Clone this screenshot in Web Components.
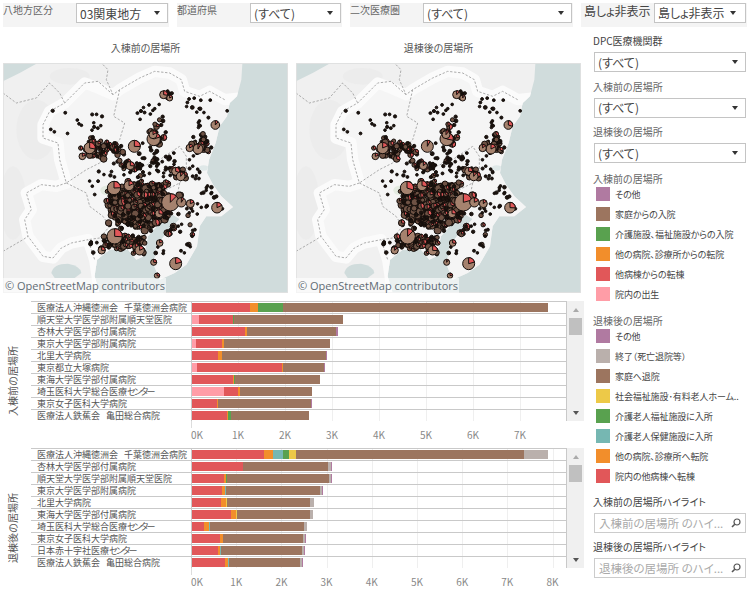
<!DOCTYPE html>
<html lang="ja">
<head>
<meta charset="utf-8">
<title>居場所ダッシュボード</title>
<style>
    html, body {
        margin: 0;
        padding: 0;
        background: #fff;
        overflow: hidden;
    }
    body {
        width: 750px;
        height: 590px;
        font-family: "Noto Sans CJK JP", "Noto Sans", sans-serif;
        font-feature-settings: "palt";
        color: #555;
    }
    .kana { letter-spacing: -1.6px; }
</style>
</head>
<body>
<tb-dashboard>
    <tb-filter slot="top" label="八地方区分"><tb-select value="03関東地方"></tb-select></tb-filter>
    <tb-filter slot="top" label="都道府県"><tb-select value="(すべて)"></tb-select></tb-filter>
    <tb-filter slot="top" label="二次医療圏"><tb-select value="(すべて)"></tb-select></tb-filter>
    <tb-filter slot="top" label="島しょ非表示" big><tb-select value="島しょ非表示" style="--arrow-right: 13px"></tb-select></tb-filter>

    <tb-map slot="maps" heading="入棟前の居場所"></tb-map>
    <tb-map slot="maps" heading="退棟後の居場所" seed="7"></tb-map>

    <tb-chart slot="charts" heading="入棟前の居場所" tick="47" count="8" shift="16">
        <tb-row segs="r58 o8 g25.3 b264.7">医療法人沖縄徳洲会 千葉徳洲会病院</tb-row>
        <tb-row segs="k7 r34 g.7 b109.3">順天堂大学医学部附属順天堂医院</tb-row>
        <tb-row segs="r53 o2 b89 p2">杏林大学医学部付属病院</tb-row>
        <tb-row segs="k4 r26 o2 b106">東京大学医学部附属病院</tb-row>
        <tb-row segs="r26 o4 b104 p1">北里大学病院</tb-row>
        <tb-row segs="k5 r85 o1 b41 p1">東京都立大塚病院</tb-row>
        <tb-row segs="r41 o1 g1 b85">東海大学医学部付属病院</tb-row>
        <tb-row segs="k32 r14 o2 b72">埼玉医科大学総合医療<span class="kana">センター</span></tb-row>
        <tb-row segs="r25 o1 b93 p1">東京女子医科大学病院</tb-row>
        <tb-row segs="r35 o1 g3 b78">医療法人鉄蕉会 亀田総合病院</tb-row>
    </tb-chart>
    <tb-chart slot="charts" heading="退棟後の居場所" tick="45.2" count="9" shift="15">
        <tb-row segs="r72 o9.3 t9.7 g6 y7 b228 a24">医療法人沖縄徳洲会 千葉徳洲会病院</tb-row>
        <tb-row segs="r51.3 b84.7 a3.3 p.7">杏林大学医学部付属病院</tb-row>
        <tb-row segs="r32 o2 g1 b102 a2 p1">順天堂大学医学部附属順天堂医院</tb-row>
        <tb-row segs="r30 o3 t1 b94 a1.5 p.5">東京大学医学部附属病院</tb-row>
        <tb-row segs="r29 o5 y1 b83 a4">北里大学病院</tb-row>
        <tb-row segs="r39 o5 y1 b73 a3">東海大学医学部付属病院</tb-row>
        <tb-row segs="r12 o5 t.7 b94.3 a3">埼玉医科大学総合医療<span class="kana">センター</span></tb-row>
        <tb-row segs="r28 o3 b80 a2 p1">東京女子医科大学病院</tb-row>
        <tb-row segs="r26 o2 t1 b81 a1.5 p.5">日本赤十字社医療<span class="kana">センター</span></tb-row>
        <tb-row segs="r33 o3 t1 b71 a2 p1">医療法人鉄蕉会 亀田総合病院</tb-row>
    </tb-chart>

    <tb-field slot="side" label="DPC医療機関群" dark><tb-select value="(すべて)"></tb-select></tb-field>
    <tb-field slot="side" label="入棟前の居場所"><tb-select value="(すべて)"></tb-select></tb-field>
    <tb-field slot="side" label="退棟後の居場所"><tb-select value="(すべて)"></tb-select></tb-field>
    <tb-legend slot="side" heading="入棟前の居場所">
        <tb-key color="#B07AA1">その他</tb-key>
        <tb-key color="#9C755F">家庭からの入院</tb-key>
        <tb-key color="#59A14F">介護施設、福祉施設からの入院</tb-key>
        <tb-key color="#F28E2B">他の病院、診療所からの転院</tb-key>
        <tb-key color="#E15759">他病棟からの転棟</tb-key>
        <tb-key color="#FF9DA7">院内の出生</tb-key>
    </tb-legend>
    <tb-legend slot="side" heading="退棟後の居場所">
        <tb-key color="#B07AA1">その他</tb-key>
        <tb-key color="#BAB0AC">終了（死亡退院等）</tb-key>
        <tb-key color="#9C755F">家庭へ退院</tb-key>
        <tb-key color="#EDC948">社会福祉施設･有料老人ホーム..</tb-key>
        <tb-key color="#59A14F">介護老人福祉施設に入所</tb-key>
        <tb-key color="#76B7B2">介護老人保健施設に入所</tb-key>
        <tb-key color="#F28E2B">他の病院、診療所へ転院</tb-key>
        <tb-key color="#E15759">院内の他病棟へ転棟</tb-key>
    </tb-legend>
    <tb-field slot="side" label="入棟前の居場所ハイライト" dark><tb-search text="入棟前の居場所 のハイ..."></tb-search></tb-field>
    <tb-field slot="side" label="退棟後の居場所ハイライト" dark><tb-search text="退棟後の居場所 のハイ..."></tb-search></tb-field>
</tb-dashboard>

<script>
const colours = {
    r: '#E15759', o: '#F28E2B', g: '#59A14F', b: '#9C755F', p: '#B07AA1',
    k: '#FF9DA7', t: '#76B7B2', y: '#EDC948', a: '#BAB0AC'
};

class TbElement extends HTMLElement {
    render(html) {
        if (!this.shadowRoot) this.attachShadow({ mode: 'open' });
        this.shadowRoot.innerHTML = html;
    }
}

class TbDashboard extends TbElement {
    connectedCallback() {
        this.render(`
            <style>
                :host { display: block; width: 750px; height: 590px; overflow: hidden; }
                .top {
                    display: grid;
                    grid-template-columns: 166px 165px 223px 166px;
                    column-gap: 8px;
                    padding: 3px 0 0 3px;
                }
                .main { display: flex; }
                .left { width: 590px; flex: none; }
                .maps { display: flex; gap: 8px; padding-left: 3px; }
                .charts { display: flex; flex-direction: column; gap: 3px; margin-top: 8px; }
                .side { flex: 1; min-width: 0; padding-top: 8px; }
            </style>
            <div class="top"><slot name="top"></slot></div>
            <div class="main">
                <div class="left">
                    <div class="maps"><slot name="maps"></slot></div>
                    <div class="charts"><slot name="charts"></slot></div>
                </div>
                <div class="side"><slot name="side"></slot></div>
            </div>`);
    }
}

class TbSelect extends TbElement {
    connectedCallback() {
        this.render(`
            <style>
                :host {
                    display: flex;
                    align-items: center;
                    box-sizing: border-box;
                    height: 20px;
                    padding: 0 0 0 3px;
                    background: #fff;
                    border: 1px solid #c4c4c4;
                    font-size: 12px;
                    color: #444;
                    white-space: nowrap;
                }
                span { flex: 1; min-width: 0; }
                i {
                    width: 0;
                    height: 0;
                    margin-right: calc(var(--arrow-right, 11px) - 4px);
                    border-left: 3px solid transparent;
                    border-right: 3px solid transparent;
                    border-top: 4px solid #333;
                }
            </style>
            <span>${this.getAttribute('value')}</span><i></i>`);
    }
}

class TbFilter extends TbElement {
    connectedCallback() {
        const big = this.hasAttribute('big');
        this.render(`
            <style>
                :host {
                    display: grid;
                    grid-template-columns: 73px 1fr;
                    box-sizing: border-box;
                    height: 24px;
                    padding-right: 1px;
                    background: #f4f4f4;
                    color: #666;
                    font-size: ${big ? 12 : 10}px;
                    line-height: ${big ? 16 : 13}px;
                    white-space: nowrap;
                }
                span { ${big ? 'padding-left: 3px; color: #444;' : ''} }
            </style>
            <span>${this.getAttribute('label')}</span>
            <div><slot></slot></div>`);
    }
}

class TbField extends TbElement {
    connectedCallback() {
        this.render(`
            <style>
                :host { display: block; padding: 0 4px 0 3px; margin-bottom: 8.5px; }
                div {
                    height: 17px;
                    line-height: 12px;
                    font-size: 10px;
                    color: ${this.hasAttribute('dark') ? '#444' : '#666'};
                    white-space: nowrap;
                }
                ::slotted(*) { margin-left: 1px; }
            </style>
            <div>${this.getAttribute('label')}</div>
            <slot></slot>`);
    }
}

class TbSearch extends TbElement {
    connectedCallback() {
        this.render(`
            <style>
                :host {
                    display: flex;
                    align-items: center;
                    box-sizing: border-box;
                    height: 20px;
                    padding: 0 4px 0 4px;
                    border: 1px solid #ccc;
                    font-size: 11.5px;
                    color: #aaa;
                    white-space: nowrap;
                }
                span { flex: 1; min-width: 0; overflow: hidden; }
                svg { flex: none; display: block; }
            </style>
            <span>${this.getAttribute('text')}</span>
            <svg width="10" height="10" viewBox="0 0 10 10" fill="none" stroke="#555">
                <circle cx="6" cy="4" r="3" stroke-width="1.2"/>
                <path d="M3.8 6.2 L1 9" stroke-width="1.6"/>
            </svg>`);
    }
}

class TbLegend extends TbElement {
    connectedCallback() {
        this.render(`
            <style>
                :host { display: block; padding: 1.5px 0 0 3px; margin-bottom: 9.5px; }
                div { height: 11px; line-height: 11px; font-size: 10px; color: #666; white-space: nowrap; }
            </style>
            <div>${this.getAttribute('heading')}</div>
            <slot></slot>`);
    }
}

class TbKey extends TbElement {
    connectedCallback() {
        this.render(`
            <style>
                :host {
                    display: flex;
                    align-items: center;
                    gap: 5px;
                    height: 20px;
                    padding-left: 3px;
                    font-size: 9px;
                    letter-spacing: -0.1px;
                    color: #444;
                    white-space: nowrap;
                }
                i { width: 14px; height: 14px; flex: none; background: ${this.getAttribute('color')}; }
            </style>
            <i></i><slot></slot>`);
    }
}

class TbRow extends TbElement {
    connectedCallback() {
        const bars = this.getAttribute('segs').trim().split(/\s+/).map(seg =>
            `<i style="width:${parseFloat(seg.slice(1))}px;background:${colours[seg[0]]}"></i>`).join('');
        this.render(`
            <style>
                :host {
                    display: flex;
                    box-sizing: border-box;
                    height: 12px;
                    border-top: 1px solid #c9c9c9;
                    border-right: 1px solid #c9c9c9;
                }
                .name {
                    flex: none;
                    box-sizing: border-box;
                    width: 160px;
                    padding-left: 6px;
                    font-size: 9px;
                    line-height: 11px;
                    word-spacing: 4px;
                    color: #555;
                    white-space: nowrap;
                    overflow: hidden;
                }
                .plot {
                    flex: 1;
                    display: flex;
                    align-items: flex-start;
                    padding-top: 1px;
                    border-left: 1px solid #c9c9c9;
                    background: repeating-linear-gradient(90deg,
                        transparent 0, transparent calc(var(--tick) - 1px),
                        #efefef calc(var(--tick) - 1px), #efefef var(--tick));
                }
                i { display: block; height: 9px; flex: none; }
            </style>
            <div class="name"><slot></slot></div>
            <div class="plot">${bars}</div>`);
    }
}

class TbChart extends TbElement {
    connectedCallback() {
        const tick = parseFloat(this.getAttribute('tick'));
        const count = +this.getAttribute('count');
        let labels = '';
        for (let i = 0; i < count; i++) labels += `<span>${i}K</span>`;
        this.render(`
            <style>
                :host {
                    display: grid;
                    grid-template-columns: 31px 536px 17px;
                    grid-template-rows: 120px 24px;
                    --tick: ${tick}px;
                }
                .title {
                    grid-row: 1 / 3;
                    justify-self: start;
                    align-self: center;
                    margin: ${this.getAttribute('shift')}px 0 0 7px;
                    writing-mode: vertical-rl;
                    text-orientation: sideways;
                    transform: rotate(180deg);
                    font-feature-settings: normal;
                    font-size: 10px;
                    line-height: 12px;
                    color: #555;
                    white-space: nowrap;
                }
                .rows { display: block; }
                .bar {
                    display: flex;
                    flex-direction: column;
                    align-items: center;
                    background: #f0f0f0;
                }
                .btn { height: 17px; flex: none; display: flex; align-items: center; justify-content: center; }
                .btn i { width: 0; height: 0; margin-top: 1px; border-left: 3.5px solid transparent; border-right: 3.5px solid transparent; }
                .up i { border-bottom: 4px solid #aaa; }
                .down i { border-top: 4px solid #555; }
                .thumb { width: 13px; height: 17px; flex: none; background: #c0c0c0; }
                .gap { flex: 1; }
                .axis {
                    grid-column: 2;
                    position: relative;
                    display: flex;
                    margin-left: 154px;
                    font-size: 10px;
                    line-height: 14px;
                    padding-top: 7px;
                    color: #888;
                }
                .axis::before {
                    content: "";
                    position: absolute;
                    left: 6px;
                    top: 0;
                    width: 1px;
                    height: 7px;
                    background: #ddd;
                }
                .axis span { flex: none; box-sizing: border-box; width: var(--tick); }
                .axis span:first-child { padding-left: 6px; }
            </style>
            <div class="title">${this.getAttribute('heading')}</div>
            <div class="rows"><slot></slot></div>
            <div class="bar">
                <div class="btn up"><i></i></div>
                <div class="thumb"></div>
                <div class="gap"></div>
                <div class="btn down"><i></i></div>
            </div>
            <div class="axis">${labels}</div>`);
    }
}

// map geometry is in 3x px, the view box scales it back
const LAND = [[10,65],[60,40],[110,12],[728,12],[725,60],[712,110],[690,130],[682,170],[660,200],[648,250],[628,300],[622,340],[640,375],[665,410],[700,442],[665,470],[620,470],[600,500],[592,560],[560,615],[525,640],[480,660],[462,615],[470,560],[500,520],[540,478],[520,465],[480,490],[445,530],[432,590],[410,600],[385,570],[330,570],[292,600],[285,650],[300,700],[10,700]];
const REGION = 'M675 120 L630 95 L600 110 L555 95 L545 60 L510 40 L465 35 L420 55 L360 90 L340 105 L295 85 L255 70 L195 130 L150 155 L130 195 L130 235 L175 250 L180 300 L200 370 L170 380 L125 375 L80 400 L95 450 L75 480 L85 530 L130 590 L160 595 L185 565 L215 550 L265 540 L285 600 L300 700 L860 700 L860 100 Z';
const BORDERS = [
    'M675 120 L630 95 L600 110 L555 95 L545 60 L510 40 L465 35 L420 55 L360 90 L340 105 L320 60 L325 30 L310 15',
    'M340 105 L295 65 L255 70 L195 130 L150 155 L130 195 L130 235 L175 250 L180 300 L200 370 L170 380 L125 375 L80 400 L95 450 L75 480 L85 530 L130 590 L160 595 L185 565 L215 550 L265 540 L285 600',
    'M10 100 L50 130 L110 115 L150 70 L180 100 L195 130',
    'M10 575 L70 540 L85 530',
    'M360 90 L342 170 L375 190 L360 240 L330 270 L300 310 L260 330 L200 370',
    'M200 370 L260 400 L270 440 L310 470 L330 500 L300 535 L265 540',
    'M430 320 L480 300 L540 260 L560 290 L560 340 L540 370 L500 390',
    'M540 370 L530 420 L505 440 L490 470'
];
const CLUSTERS = [
    [300,360,20,20,7,4,5], [250,190,50,25,16,4,5], [440,150,30,15,10,4,5], [600,160,30,40,20,4,6],
    [290,560,15,15,8,4,6], [490,310,25,25,26,4,6], [460,600,8,10,3,4,6], [580,350,20,30,12,4,5],
    [570,530,20,40,22,4,7], [640,400,25,25,12,4,6], [610,450,25,15,10,4,5], [500,590,40,30,6,3,5],
    [285,265,20,14,60,5,11], [345,265,14,10,26,5,9], [470,215,12,20,24,5,10], [505,105,8,7,8,4,8],
    [605,255,16,12,38,5,9], [535,345,10,10,20,5,10], [390,320,26,16,36,4,8], [440,300,26,26,22,4,6],
    [420,385,38,9,90,5,11], [355,440,13,28,90,5,11], [430,445,42,30,420,5,11], [505,485,9,18,34,5,10],
    [370,545,28,11,140,5,11], [420,572,9,7,16,5,9]
];
const BIG = [
    [404,260,18], [343,385,20], [512,428,26], [652,444,16], [528,612,18], [345,530,23],
    [462,238,20], [492,105,12], [647,196,13], [595,268,15], [528,335,12], [543,350,13],
    [392,318,12], [420,572,14], [270,265,17], [248,290,10], [572,432,12], [545,428,14],
    [388,378,15], [478,462,12], [510,115,9], [460,225,12], [306,572,11], [462,608,9],
    [472,648,8], [570,265,11], [480,550,10]
];

function inLand(x, y) {
    let inside = false;
    for (let i = 0, j = LAND.length - 1; i < LAND.length; j = i++) {
        const [xi, yi] = LAND[i], [xj, yj] = LAND[j];
        if ((yi > y) !== (yj > y) && x < (xj - xi) * (y - yi) / (yj - yi) + xi) inside = !inside;
    }
    return inside;
}

function pie(x, y, r, share, fill) {
    const end = share * Math.PI * 2;
    const ex = x + r * Math.sin(end), ey = y - r * Math.cos(end);
    const large = share > 0.5 ? 1 : 0;
    return `<circle cx="${x}" cy="${y}" r="${r}" fill="${fill}"/>` +
        `<path d="M${x} ${y} L${x} ${y - r} A${r} ${r} 0 ${large} 1 ${ex.toFixed(1)} ${ey.toFixed(1)} Z" fill="#E15759"/>`;
}

function buildBubbles(seed) {
    // same hospitals on both maps, only the slices move
    let s = 1234;
    const rnd = () => {
        s = (s * 16807) % 2147483647;
        return s / 2147483647;
    };
    let slice = 99 + seed;
    const share = () => {
        slice = (slice * 48271) % 2147483647;
        return slice / 2147483647;
    };
    const gauss = () => (rnd() + rnd() + rnd() - 1.5) / 0.5;
    let out = '';
    for (const [cx, cy, sx, sy, n, rmin, rmax] of CLUSTERS) {
        for (let i = 0; i < n; i++) {
            const x = +(cx + gauss() * sx).toFixed(1);
            const y = +(cy + gauss() * sy).toFixed(1);
            if (!inLand(x, y)) continue;
            const r = +(rmin + Math.pow(rnd(), 2.2) * (rmax - rmin)).toFixed(1);
            if (r < 6) {
                out += `<circle cx="${x}" cy="${y}" r="${r}" fill="#1d140f"/>`;
            } else if (share() < 0.5) {
                out += pie(x, y, r, 0.2 + share() * 0.3, '#6e5244');
            } else {
                out += `<circle cx="${x}" cy="${y}" r="${r}" fill="#6e5244"/>`;
            }
        }
    }
    for (const [x, y, r] of BIG) out += pie(x, y, r, 0.08 + share() * 0.22, '#a5826e');
    return out;
}

class TbMap extends TbElement {
    connectedCallback() {
        const seed = +(this.getAttribute('seed') || 0);
        const land = 'M' + LAND.map(p => p.join(' ')).join(' L') + ' Z';
        const id = 'land' + seed;
        this.render(`
            <style>
                :host { display: block; width: 285px; flex: none; }
                h2 {
                    margin: 0;
                    height: 36px;
                    box-sizing: border-box;
                    padding-top: 14px;
                    font-size: 10px;
                    line-height: 14px;
                    font-weight: 400;
                    text-align: center;
                    color: #555;
                }
                .frame { position: relative; width: 285px; height: 230px; }
                svg { display: block; }
                .credit {
                    position: absolute;
                    left: 0;
                    bottom: 0;
                    padding: 0 1px 0 2px;
                    height: 15px;
                    line-height: 15px;
                    background: rgba(255,255,255,.6);
                    font-family: "Open Sans", "Noto Sans", sans-serif;
                    font-size: 11px;
                    color: #5f6b73;
                    white-space: nowrap;
                }
            </style>
            <h2>${this.getAttribute('heading')}</h2>
            <div class="frame">
                <svg width="285" height="230" viewBox="10 10 855 690">
                    <defs><clipPath id="${id}"><path d="${land}"/></clipPath></defs>
                    <rect x="10" y="10" width="855" height="690" fill="#d0dcdc"/>
                    <path d="${land}" fill="#f0f0f0"/>
                    <g clip-path="url(#${id})">
                        <ellipse cx="110" cy="210" rx="60" ry="90" fill="#ececec"/>
                        <ellipse cx="40" cy="430" rx="40" ry="110" fill="#ececec"/>
                        <ellipse cx="210" cy="50" rx="60" ry="25" fill="#ececec"/>
                        <path d="${REGION}" fill="#f5f5f5" stroke="#fbfbfb" stroke-width="34" stroke-linejoin="round"/>
                        <ellipse cx="320" cy="392" rx="18" ry="14" fill="#e4ebe1"/>
                        <ellipse cx="612" cy="325" rx="14" ry="8" fill="#dfe8e8"/>
                    </g>
                    <path d="M155 640 Q160 612 205 612 Q245 620 245 640 L225 655 L165 655 Z" fill="#d0dcdc"/>
                    <g fill="none" stroke="#ababab" stroke-width="3" stroke-dasharray="7 5">
                        ${BORDERS.map(d => `<path d="${d}"/>`).join('')}
                    </g>
                    <g stroke="#140e0b" stroke-width="3">${buildBubbles(seed)}</g>
                    <rect x="11" y="11" width="853" height="688" fill="none" stroke="#e2e2e2" stroke-width="3"/>
                </svg>
                <div class="credit">© OpenStreetMap contributors</div>
            </div>`);
    }
}

customElements.define('tb-dashboard', TbDashboard);
customElements.define('tb-select', TbSelect);
customElements.define('tb-filter', TbFilter);
customElements.define('tb-field', TbField);
customElements.define('tb-search', TbSearch);
customElements.define('tb-legend', TbLegend);
customElements.define('tb-key', TbKey);
customElements.define('tb-row', TbRow);
customElements.define('tb-chart', TbChart);
customElements.define('tb-map', TbMap);
</script>
</body>
</html>
